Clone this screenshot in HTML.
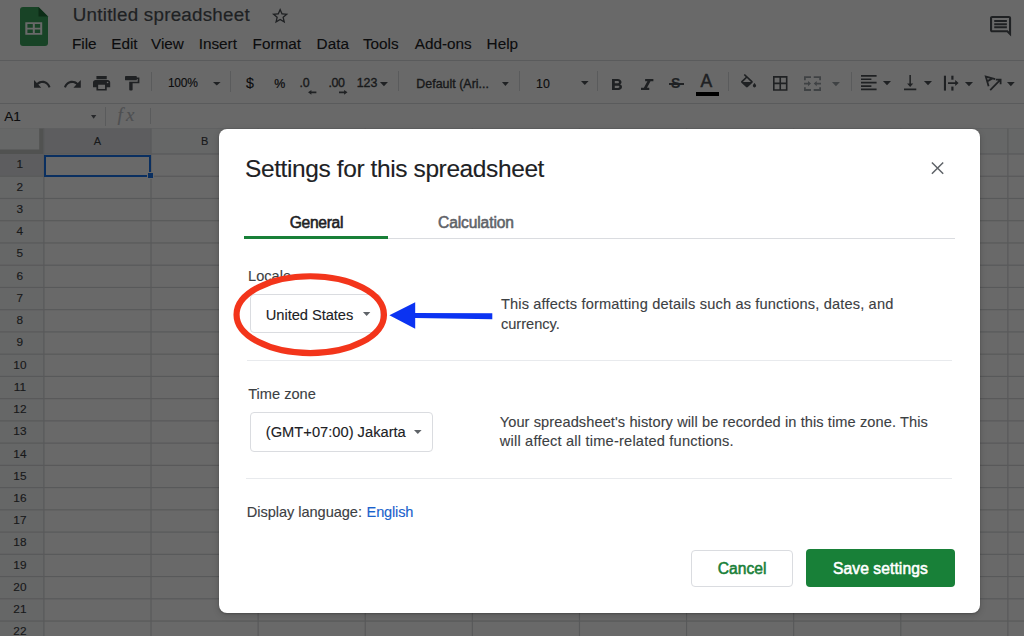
<!DOCTYPE html>
<html><head><meta charset="utf-8"><style>
html,body{margin:0;padding:0;width:1024px;height:636px;overflow:hidden;background:#fff}
body{position:relative;font-family:"Liberation Sans",sans-serif}
.t{position:absolute;white-space:nowrap;line-height:normal;-webkit-text-stroke:0.12px currentColor}
.i{position:absolute;display:block;overflow:visible}
.r{position:absolute}
</style></head><body>
<svg class="i" style="left:20px;top:7px;width:28px;height:39px" viewBox="0 0 28 39"><path d="M3 0H18.5L28 9.5V36a3 3 0 0 1-3 3H3a3 3 0 0 1-3-3V3a3 3 0 0 1 3-3z" fill="#3aa45c"/><path d="M18.5 0V9.5H28z" fill="#1e6b37"/><path d="M5.3 15.2h16.9v12.6H5.3z M7.4 17.1v3.6h5.4v-3.6z M14.8 17.1v3.6h5.4v-3.6z M7.4 22.5v3.6h5.4v-3.6z M14.8 22.5v3.6h5.4v-3.6z" fill="#fff" fill-rule="evenodd"/></svg>
<div class="t" style="left:72.80px;top:4px;font-size:18.8px;letter-spacing:0.239px;color:#4d5156;-webkit-text-stroke:0.2px #4d5156;">Untitled spreadsheet</div>
<svg class="i" style="left:271.6px;top:7.9px;width:16.30px;height:15.10px" viewBox="2.05 2.05 19.900 18.900" preserveAspectRatio="none"><path d="M22 9.24l-7.19-.62L12 2 9.19 8.63 2 9.24l5.46 4.73L5.82 21 12 17.27 18.18 21l-1.63-7.03L22 9.24zM12 15.4l-3.76 2.27 1-4.28-3.32-2.88 4.38-.38L12 6.1l1.71 4.04 4.38.38-3.32 2.88 1 4.28L12 15.4z" fill="#4d5156" /></svg>
<div class="t" style="left:71.90px;top:35px;font-size:15.3px;color:#202124;">File</div>
<div class="t" style="left:111.20px;top:35px;font-size:15.3px;color:#202124;">Edit</div>
<div class="t" style="left:151.00px;top:35px;font-size:15.3px;color:#202124;">View</div>
<div class="t" style="left:198.70px;top:35px;font-size:15.3px;color:#202124;">Insert</div>
<div class="t" style="left:252.60px;top:35px;font-size:15.3px;color:#202124;">Format</div>
<div class="t" style="left:316.60px;top:35px;font-size:15.3px;color:#202124;">Data</div>
<div class="t" style="left:362.90px;top:35px;font-size:15.3px;color:#202124;">Tools</div>
<div class="t" style="left:414.80px;top:35px;font-size:15.3px;color:#202124;">Add-ons</div>
<div class="t" style="left:486.60px;top:35px;font-size:15.3px;color:#202124;">Help</div>
<svg class="i" style="left:990.1px;top:15.5px;width:21.10px;height:20.40px" viewBox="2.0 2.0 20.000 20.000" preserveAspectRatio="none"><path d="M20 2H4c-1.1 0-2 .9-2 2v12c0 1.1.9 2 2 2h14l4 4V4c0-1.1-.9-2-2-2zm0 15.17L18.83 16H4V4h16v13.17zM6 12h12v2H6zm0-3h12v2H6zm0-3h12v2H6z" fill="#4d5156" /></svg>
<div class="r" style="left:0px;top:60px;width:1024.00px;height:1.00px;background:#dadce0;"></div>
<div class="r" style="left:0px;top:103px;width:1024.00px;height:1.00px;background:#dadce0;"></div>
<svg class="i" style="left:34px;top:79.8px;width:16.50px;height:7.70px" viewBox="2.0 7.0 20.450 9.000" preserveAspectRatio="none"><path d="M12.5 8c-2.65 0-5.05.99-6.9 2.6L2 7v9h9l-3.62-3.62c1.39-1.16 3.16-1.88 5.12-1.88 3.54 0 6.550 2.31 7.6 5.5l2.37-.78C21.08 11.03 17.15 8 12.5 8z" fill="#4d5156" /></svg>
<svg class="i" style="left:64px;top:79.8px;width:16.80px;height:7.70px" viewBox="1.55 7.0 20.450 9.000" preserveAspectRatio="none"><path d="M18.4 10.6C16.55 8.99 14.15 8 11.5 8c-4.65 0-8.58 3.03-9.96 7.22L3.9 16c1.05-3.19 4.05-5.5 7.6-5.5 1.95 0 3.73.72 5.12 1.88L13 16h9V7l-3.6 3.6z" fill="#4d5156" /></svg>
<svg class="i" style="left:93px;top:76px;width:17.20px;height:14.50px" viewBox="2.0 3.0 20.000 18.000" preserveAspectRatio="none"><path d="M19 8H5c-1.66 0-3 1.34-3 3v6h4v4h12v-4h4v-6c0-1.66-1.34-3-3-3zm-3 11H8v-5h8v5zm3-7c-.55 0-1-.45-1-1s.45-1 1-1 1 .45 1 1-.45 1-1 1zm-1-9H6v4h12V3z" fill="#4d5156" /></svg>
<svg class="i" style="left:124.9px;top:76px;width:14.40px;height:14.50px" viewBox="4.0 2.0 17.000 20.000" preserveAspectRatio="none"><path d="M18 4V3c0-.55-.45-1-1-1H5c-.55 0-1 .45-1 1v4c0 .55.45 1 1 1h12c.55 0 1-.45 1-1V6h1v4H9v11c0 .55.45 1 1 1h2c.55 0 1-.45 1-1v-9h8V4h-3z" fill="#4d5156" /></svg>
<div class="r" style="left:151px;top:72px;width:1.00px;height:19.00px;background:#dadce0;"></div>
<div class="r" style="left:229.5px;top:71.4px;width:1.00px;height:20.20px;background:#dadce0;"></div>
<div class="r" style="left:398.4px;top:71.3px;width:1.00px;height:20.10px;background:#dadce0;"></div>
<div class="r" style="left:519.3px;top:71px;width:1.00px;height:20.40px;background:#dadce0;"></div>
<div class="r" style="left:597.4px;top:71px;width:1.00px;height:20.40px;background:#dadce0;"></div>
<div class="r" style="left:728.3px;top:72px;width:1.00px;height:19.00px;background:#dadce0;"></div>
<div class="r" style="left:850.6px;top:72px;width:1.00px;height:19.00px;background:#dadce0;"></div>
<div class="t" style="left:167.90px;top:76px;font-size:12px;letter-spacing:-0.200px;color:#202124;">100%</div>
<svg class="i" style="left:212.6px;top:82px;width:7.60px;height:3.40px" viewBox="7.05 10.0 9.900 5.000" preserveAspectRatio="none"><path d="M7 10l5 5 5-5z" fill="#4d5156" /></svg>
<div class="t" style="left:245.90px;top:75px;font-size:14.2px;color:#202124;">$</div>
<div class="t" style="left:274.20px;top:77px;font-size:12.4px;color:#202124;-webkit-text-stroke:0.2px #202124;">%</div>
<div class="t" style="left:299.60px;top:76px;font-size:12.4px;letter-spacing:-0.250px;color:#3c4043;-webkit-text-stroke:0.35px #3c4043;">.0</div>
<div class="t" style="left:328.40px;top:76px;font-size:12.4px;letter-spacing:-0.325px;color:#3c4043;-webkit-text-stroke:0.35px #3c4043;">.00</div>
<svg class="i" style="left:307.6px;top:89.7px;width:8.4px;height:4.7px" viewBox="0 0 8.4 4.7"><path d="M0 2.35L3.4 0V1.45H8.4V3.25H3.4V4.7z" fill="#4d5156"/></svg>
<svg class="i" style="left:339.2px;top:89.7px;width:8.5px;height:4.7px" viewBox="0 0 8.5 4.7"><path d="M8.5 2.35L5.1 0V1.45H0V3.25H5.1V4.7z" fill="#4d5156"/></svg>
<div class="t" style="left:356.80px;top:76px;font-size:12.4px;letter-spacing:-0.100px;color:#3c4043;-webkit-text-stroke:0.35px #3c4043;">123</div>
<svg class="i" style="left:380px;top:82px;width:7.90px;height:4.20px" viewBox="7.05 10.0 9.900 5.000" preserveAspectRatio="none"><path d="M7 10l5 5 5-5z" fill="#4d5156" /></svg>
<div class="t" style="left:416.30px;top:77px;font-size:12.4px;letter-spacing:0.025px;color:#3c4043;-webkit-text-stroke:0.35px #3c4043;">Default (Ari...</div>
<svg class="i" style="left:501.7px;top:81.7px;width:6.80px;height:3.90px" viewBox="7.05 10.0 9.900 5.000" preserveAspectRatio="none"><path d="M7 10l5 5 5-5z" fill="#4d5156" /></svg>
<div class="t" style="left:535.90px;top:77px;font-size:12.4px;letter-spacing:0.200px;color:#202124;">10</div>
<svg class="i" style="left:580.8px;top:81.4px;width:7.60px;height:4.00px" viewBox="7.05 10.0 9.900 5.000" preserveAspectRatio="none"><path d="M7 10l5 5 5-5z" fill="#4d5156" /></svg>
<svg class="i" style="left:612px;top:78.6px;width:10.00px;height:11.00px" viewBox="7.0 4.0 10.750 14.000" preserveAspectRatio="none"><path d="M15.6 10.79c.97-.67 1.65-1.77 1.65-2.79 0-2.26-1.75-4-4-4H7v14h7.04c2.09 0 3.71-1.7 3.71-3.79 0-1.52-.86-2.82-2.15-3.42zM10 6.5h3c.83 0 1.5.67 1.5 1.5s-.67 1.5-1.5 1.5h-3v-3zm3.5 9H10v-3h3.5c.83 0 1.5.67 1.5 1.5s-.67 1.5-1.5 1.5z" fill="#4d5156" /></svg>
<svg class="i" style="left:640.9px;top:78.6px;width:12.40px;height:11.00px" viewBox="6.0 4.0 12.000 14.000" preserveAspectRatio="none"><path d="M10 4v3h2.21l-3.42 8H6v3h8v-3h-2.21l3.42-8H18V4z" fill="#4d5156" /></svg>
<div class="t" style="left:671.00px;top:75px;font-size:14px;font-weight:700;color:#4d5156;">S</div>
<div class="r" style="left:669px;top:82.5px;width:15.20px;height:2.00px;background:#4d5156;"></div>
<div class="t" style="left:700.60px;top:71px;font-size:17.5px;color:#4d5156;-webkit-text-stroke:0.5px #4d5156;">A</div>
<div class="r" style="left:696.4px;top:92px;width:22.50px;height:3.50px;background:#000;"></div>
<svg class="i" style="left:740.5px;top:73.9px;width:15.20px;height:13.40px" viewBox="3.0 0.0 18.000 17.000" preserveAspectRatio="none"><path d="M16.56 8.94L7.62 0 6.21 1.41l2.38 2.38-5.15 5.15c-.59.59-.59 1.54 0 2.12l5.5 5.5c.29.29.68.44 1.06.44s.77-.15 1.06-.44l5.5-5.5c.59-.58.59-1.53 0-2.12zM5.21 10L10 5.21 14.79 10H5.21zM19 11.5s-2 2.17-2 3.5c0 1.1.9 2 2 2s2-.9 2-2c0-1.33-2-3.5-2-3.5z" fill="#4d5156" /></svg>
<svg class="i" style="left:772.8px;top:75.5px;width:14.50px;height:14.80px" viewBox="3.0 3.0 18.000 18.000" preserveAspectRatio="none"><path d="M3 3v18h18V3H3zm8 16H5v-6h6v6zm0-8H5V5h6v6zm8 8h-6v-6h6v6zm0-8h-6V5h6v6z" fill="#4d5156" /></svg>
<svg class="i" style="left:800px;top:70px;width:30px;height:25px" viewBox="800 70 30 25"><g fill="none" stroke="#9aa0a6" stroke-width="1.8"><path d="M811 77.2H804.9V80.3M804.9 87.3V90H811M813.7 77.2H820.1V80.3M820.1 87.3V90H813.7M804 83.6H809M821 83.6H815.7"/></g><path d="M808 80.9L811 83.6L808 86.3zM816.7 80.9L813.7 83.6L816.7 86.3z" fill="#9aa0a6"/></svg>
<svg class="i" style="left:831.9px;top:81.8px;width:7.90px;height:4.20px" viewBox="7.05 10.0 9.900 5.000" preserveAspectRatio="none"><path d="M7 10l5 5 5-5z" fill="#9aa0a6" /></svg>
<svg class="i" style="left:860.8px;top:75.3px;width:15.60px;height:15.30px" viewBox="3.0 3.0 18.000 18.000" preserveAspectRatio="none"><path d="M15 15H3v2h12v-2zm0-8H3v2h12V7zM3 13h18v-2H3v2zm0 8h18v-2H3v2zM3 3v2h18V3H3z" fill="#4d5156" /></svg>
<svg class="i" style="left:882.5px;top:81.4px;width:8.00px;height:4.20px" viewBox="7.05 10.0 9.900 5.000" preserveAspectRatio="none"><path d="M7 10l5 5 5-5z" fill="#4d5156" /></svg>
<svg class="i" style="left:903.8px;top:75.3px;width:12.30px;height:15.30px" viewBox="4.0 3.0 16.000 18.000" preserveAspectRatio="none"><path d="M16 13h-3V3h-2v10H8l4 4 4-4zM4 19v2h16v-2H4z" fill="#4d5156" /></svg>
<svg class="i" style="left:923.7px;top:81.4px;width:8.00px;height:4.20px" viewBox="7.05 10.0 9.900 5.000" preserveAspectRatio="none"><path d="M7 10l5 5 5-5z" fill="#4d5156" /></svg>
<svg class="i" style="left:940px;top:70px;width:25px;height:25px" viewBox="940 70 25 25" fill="#4d5156"><rect x="943.9" y="75.7" width="2.1" height="14.9"/><rect x="951.3" y="75.7" width="2.2" height="4"/><rect x="951.3" y="86.6" width="2.2" height="4"/><path d="M948 82.2H955.2V80L958.6 83.05L955.2 86.1V83.9H948z"/></svg>
<svg class="i" style="left:965.3px;top:81.8px;width:8.00px;height:4.20px" viewBox="7.05 10.0 9.900 5.000" preserveAspectRatio="none"><path d="M7 10l5 5 5-5z" fill="#4d5156" /></svg>
<svg class="i" style="left:980px;top:70px;width:25px;height:25px" viewBox="980 70 25 25" fill="none" stroke="#4d5156" stroke-width="1.8"><path d="M995.2 79.2L985.8 76.6L988.6 86.2M987.2 81.4L992.4 78.4"/><path d="M990.2 90.2L1000 80.2M995.8 79.6H1000.6V84.2"/></svg>
<svg class="i" style="left:1006.9px;top:81.8px;width:7.70px;height:4.20px" viewBox="7.05 10.0 9.900 5.000" preserveAspectRatio="none"><path d="M7 10l5 5 5-5z" fill="#4d5156" /></svg>
<div class="t" style="left:4.20px;top:109px;font-size:13.6px;color:#202124;">A1</div>
<svg class="i" style="left:90.8px;top:114.9px;width:5.30px;height:3.80px" viewBox="7.05 10.0 9.900 5.000" preserveAspectRatio="none"><path d="M7 10l5 5 5-5z" fill="#5f6368" /></svg>
<div class="r" style="left:104.5px;top:107px;width:1.00px;height:19.00px;background:#dadce0;"></div>
<div class="t" style="left:117.50px;top:104px;font-size:19px;font-style:italic;letter-spacing:3.100px;color:#bdc1c6;font-family:'Liberation Serif',serif;">fx</div>
<div class="r" style="left:149.5px;top:108.4px;width:1.00px;height:16.10px;background:#dadce0;"></div>
<div class="r" style="left:0px;top:127.5px;width:1024.00px;height:1.00px;background:#dadce0;"></div>
<svg class="i" style="left:0;top:0;width:1024px;height:636px" viewBox="0 0 1024 636">
<rect x="0" y="128.5" width="1024" height="25.5" fill="#f8f9fa"/>
<rect x="0" y="154" width="43.9" height="482" fill="#f8f9fa"/>
<rect x="43.9" y="128.5" width="107.1" height="25.5" fill="#e1e3e6"/>
<rect x="0" y="154" width="43.9" height="22.24" fill="#e1e3e6"/>
<rect x="0" y="128.5" width="39.2" height="21" fill="#f8f9fa"/>
<rect x="39.2" y="128.5" width="4.7" height="25.5" fill="#c4c7c5"/>
<rect x="0" y="149.5" width="43.9" height="4.5" fill="#c4c7c5"/>
<rect x="43.30" y="128.5" width="1.2" height="508" fill="#d6d8da"/>
<rect x="150.41" y="128.5" width="1.2" height="508" fill="#d6d8da"/>
<rect x="257.52" y="128.5" width="1.2" height="508" fill="#d6d8da"/>
<rect x="364.63" y="128.5" width="1.2" height="508" fill="#d6d8da"/>
<rect x="471.74" y="128.5" width="1.2" height="508" fill="#d6d8da"/>
<rect x="578.85" y="128.5" width="1.2" height="508" fill="#d6d8da"/>
<rect x="685.96" y="128.5" width="1.2" height="508" fill="#d6d8da"/>
<rect x="793.07" y="128.5" width="1.2" height="508" fill="#d6d8da"/>
<rect x="900.18" y="128.5" width="1.2" height="508" fill="#d6d8da"/>
<rect x="1007.29" y="128.5" width="1.2" height="508" fill="#d6d8da"/>
<rect x="43.9" y="153.40" width="1024" height="1.2" fill="#d6d8da"/>
<rect x="0" y="175.64" width="1024" height="1.2" fill="#d6d8da"/>
<rect x="0" y="197.88" width="1024" height="1.2" fill="#d6d8da"/>
<rect x="0" y="220.12" width="1024" height="1.2" fill="#d6d8da"/>
<rect x="0" y="242.36" width="1024" height="1.2" fill="#d6d8da"/>
<rect x="0" y="264.60" width="1024" height="1.2" fill="#d6d8da"/>
<rect x="0" y="286.84" width="1024" height="1.2" fill="#d6d8da"/>
<rect x="0" y="309.08" width="1024" height="1.2" fill="#d6d8da"/>
<rect x="0" y="331.32" width="1024" height="1.2" fill="#d6d8da"/>
<rect x="0" y="353.56" width="1024" height="1.2" fill="#d6d8da"/>
<rect x="0" y="375.80" width="1024" height="1.2" fill="#d6d8da"/>
<rect x="0" y="398.04" width="1024" height="1.2" fill="#d6d8da"/>
<rect x="0" y="420.28" width="1024" height="1.2" fill="#d6d8da"/>
<rect x="0" y="442.52" width="1024" height="1.2" fill="#d6d8da"/>
<rect x="0" y="464.76" width="1024" height="1.2" fill="#d6d8da"/>
<rect x="0" y="487.00" width="1024" height="1.2" fill="#d6d8da"/>
<rect x="0" y="509.24" width="1024" height="1.2" fill="#d6d8da"/>
<rect x="0" y="531.48" width="1024" height="1.2" fill="#d6d8da"/>
<rect x="0" y="553.72" width="1024" height="1.2" fill="#d6d8da"/>
<rect x="0" y="575.96" width="1024" height="1.2" fill="#d6d8da"/>
<rect x="0" y="598.20" width="1024" height="1.2" fill="#d6d8da"/>
<rect x="0" y="620.44" width="1024" height="1.2" fill="#d6d8da"/>
</svg>
<div class="t" style="left:93.77px;top:135px;font-size:11px;color:#3c4043;">A</div>
<div class="t" style="left:200.88px;top:135px;font-size:11px;color:#3c4043;">B</div>
<div class="t" style="left:307.69px;top:135px;font-size:11px;color:#3c4043;">C</div>
<div class="t" style="left:414.80px;top:135px;font-size:11px;color:#3c4043;">D</div>
<div class="t" style="left:522.22px;top:135px;font-size:11px;color:#3c4043;">E</div>
<div class="t" style="left:629.65px;top:135px;font-size:11px;color:#3c4043;">F</div>
<div class="t" style="left:735.83px;top:135px;font-size:11px;color:#3c4043;">G</div>
<div class="t" style="left:843.24px;top:135px;font-size:11px;color:#3c4043;">H</div>
<div class="t" style="left:952.80px;top:135px;font-size:11px;color:#3c4043;">I</div>
<div class="t" style="left:16.57px;top:157px;font-size:11.8px;color:#3c4043;">1</div>
<div class="t" style="left:16.57px;top:180px;font-size:11.8px;color:#3c4043;">2</div>
<div class="t" style="left:16.57px;top:202px;font-size:11.8px;color:#3c4043;">3</div>
<div class="t" style="left:16.57px;top:224px;font-size:11.8px;color:#3c4043;">4</div>
<div class="t" style="left:16.57px;top:246px;font-size:11.8px;color:#3c4043;">5</div>
<div class="t" style="left:16.57px;top:269px;font-size:11.8px;color:#3c4043;">6</div>
<div class="t" style="left:16.57px;top:291px;font-size:11.8px;color:#3c4043;">7</div>
<div class="t" style="left:16.57px;top:313px;font-size:11.8px;color:#3c4043;">8</div>
<div class="t" style="left:16.57px;top:335px;font-size:11.8px;color:#3c4043;">9</div>
<div class="t" style="left:13.35px;top:358px;font-size:11.8px;color:#3c4043;">10</div>
<div class="t" style="left:13.78px;top:380px;font-size:11.8px;color:#3c4043;">11</div>
<div class="t" style="left:13.35px;top:402px;font-size:11.8px;color:#3c4043;">12</div>
<div class="t" style="left:13.35px;top:424px;font-size:11.8px;color:#3c4043;">13</div>
<div class="t" style="left:13.35px;top:447px;font-size:11.8px;color:#3c4043;">14</div>
<div class="t" style="left:13.35px;top:469px;font-size:11.8px;color:#3c4043;">15</div>
<div class="t" style="left:13.35px;top:491px;font-size:11.8px;color:#3c4043;">16</div>
<div class="t" style="left:13.35px;top:513px;font-size:11.8px;color:#3c4043;">17</div>
<div class="t" style="left:13.35px;top:535px;font-size:11.8px;color:#3c4043;">18</div>
<div class="t" style="left:13.35px;top:558px;font-size:11.8px;color:#3c4043;">19</div>
<div class="t" style="left:13.35px;top:580px;font-size:11.8px;color:#3c4043;">20</div>
<div class="t" style="left:13.35px;top:602px;font-size:11.8px;color:#3c4043;">21</div>
<div class="t" style="left:13.35px;top:624px;font-size:11.8px;color:#3c4043;">22</div>
<div class="r" style="left:44.3px;top:155px;width:106.5px;height:21.7px;box-sizing:border-box;border:2px solid #1a73e8"></div>
<div class="r" style="left:147.1px;top:172.3px;width:6.80px;height:6.80px;background:#1a73e8;border:1px solid #fff;box-sizing:border-box;"></div>
<div class="r" style="left:0px;top:0px;width:1024.00px;height:636.00px;background:rgba(0,0,0,0.59);"></div>
<div class="r" style="left:219px;top:129px;width:761px;height:484px;background:#fff;border-radius:8px;box-shadow:0 2px 6px 1px rgba(0,0,0,.12),0 1px 2px rgba(0,0,0,.2)"></div>
<div class="t" style="left:245.00px;top:155px;font-size:24.5px;letter-spacing:-0.396px;color:#202124;">Settings for this spreadsheet</div>
<svg class="i" style="left:925px;top:155px;width:25px;height:25px" viewBox="925 155 25 25"><path d="M931.9 162.5L943.2 173.8M943.2 162.5L931.9 173.8" stroke="#5f6368" stroke-width="1.5"/></svg>
<div class="t" style="left:289.70px;top:214px;font-size:15.6px;letter-spacing:-0.300px;color:#202124;-webkit-text-stroke:0.55px #202124;">General</div>
<div class="t" style="left:438.00px;top:214px;font-size:15.6px;letter-spacing:-0.120px;color:#5f6368;-webkit-text-stroke:0.55px #5f6368;">Calculation</div>
<div class="r" style="left:388px;top:237.5px;width:567.00px;height:1.00px;background:#dadce0;"></div>
<div class="r" style="left:244.4px;top:236.3px;width:143.60px;height:2.50px;background:#188038;"></div>
<div class="t" style="left:248.10px;top:268px;font-size:14.6px;color:#3c4043;">Locale</div>
<div class="r" style="left:250.2px;top:294.3px;width:131px;height:39.2px;box-sizing:border-box;border:1px solid #dadce0;border-radius:4px"></div>
<div class="t" style="left:265.80px;top:307px;font-size:14.7px;letter-spacing:-0.062px;color:#202124;">United States</div>
<svg class="i" style="left:362.7px;top:312.3px;width:7.30px;height:4.00px" viewBox="7.05 10.0 9.900 5.000" preserveAspectRatio="none"><path d="M7 10l5 5 5-5z" fill="#5f6368" /></svg>
<div class="t" style="left:500.90px;top:296px;font-size:14.6px;letter-spacing:0.163px;color:#3c4043;">This affects formatting details such as functions, dates, and</div>
<div class="t" style="left:500.90px;top:316px;font-size:14.6px;color:#3c4043;">currency.</div>
<div class="r" style="left:246.6px;top:359.8px;width:705.40px;height:1.00px;background:#e8eaed;"></div>
<div class="t" style="left:248.20px;top:386px;font-size:14.6px;color:#3c4043;">Time zone</div>
<div class="r" style="left:250.2px;top:412.1px;width:182.6px;height:39.5px;box-sizing:border-box;border:1px solid #dadce0;border-radius:4px"></div>
<div class="t" style="left:265.80px;top:424px;font-size:14.7px;color:#202124;">(GMT+07:00) Jakarta</div>
<svg class="i" style="left:414.4px;top:430.3px;width:7.60px;height:3.90px" viewBox="7.05 10.0 9.900 5.000" preserveAspectRatio="none"><path d="M7 10l5 5 5-5z" fill="#5f6368" /></svg>
<div class="t" style="left:499.70px;top:414px;font-size:14.6px;letter-spacing:0.090px;color:#3c4043;">Your spreadsheet's history will be recorded in this time zone. This</div>
<div class="t" style="left:499.75px;top:433px;font-size:14.6px;letter-spacing:0.207px;color:#3c4043;">will affect all time-related functions.</div>
<div class="r" style="left:246.3px;top:477.7px;width:705.70px;height:1.00px;background:#e8eaed;"></div>
<div class="t" style="left:246.80px;top:504px;font-size:14.6px;letter-spacing:-0.053px;color:#3c4043;">Display language:</div>
<div class="t" style="left:366.60px;top:504px;font-size:14.6px;letter-spacing:-0.183px;color:#1a62cc;">English</div>
<div class="r" style="left:691.3px;top:549.9px;width:102px;height:37.4px;box-sizing:border-box;border:1px solid #dadce0;border-radius:4px"></div>
<div class="t" style="left:717.70px;top:560px;font-size:15.6px;letter-spacing:0.030px;color:#188038;-webkit-text-stroke:0.55px #188038;">Cancel</div>
<div class="r" style="left:806px;top:549.3px;width:148.7px;height:38px;background:#188038;border-radius:4px"></div>
<div class="t" style="left:833.00px;top:560px;font-size:15.6px;letter-spacing:0.096px;color:#fff;-webkit-text-stroke:0.55px #fff;">Save settings</div>
<svg class="i" style="left:0;top:0;width:1024px;height:636px" viewBox="0 0 1024 636"><ellipse cx="310.25" cy="314.65" rx="73.7" ry="38.4" fill="none" stroke="#f3351b" stroke-width="6.2"/><path d="M389.4 315.2L415.2 302.3V312.9L492.3 313.2V319.3L415.2 318.1V328.7Z" fill="#0b33f2"/></svg>
</body></html>
